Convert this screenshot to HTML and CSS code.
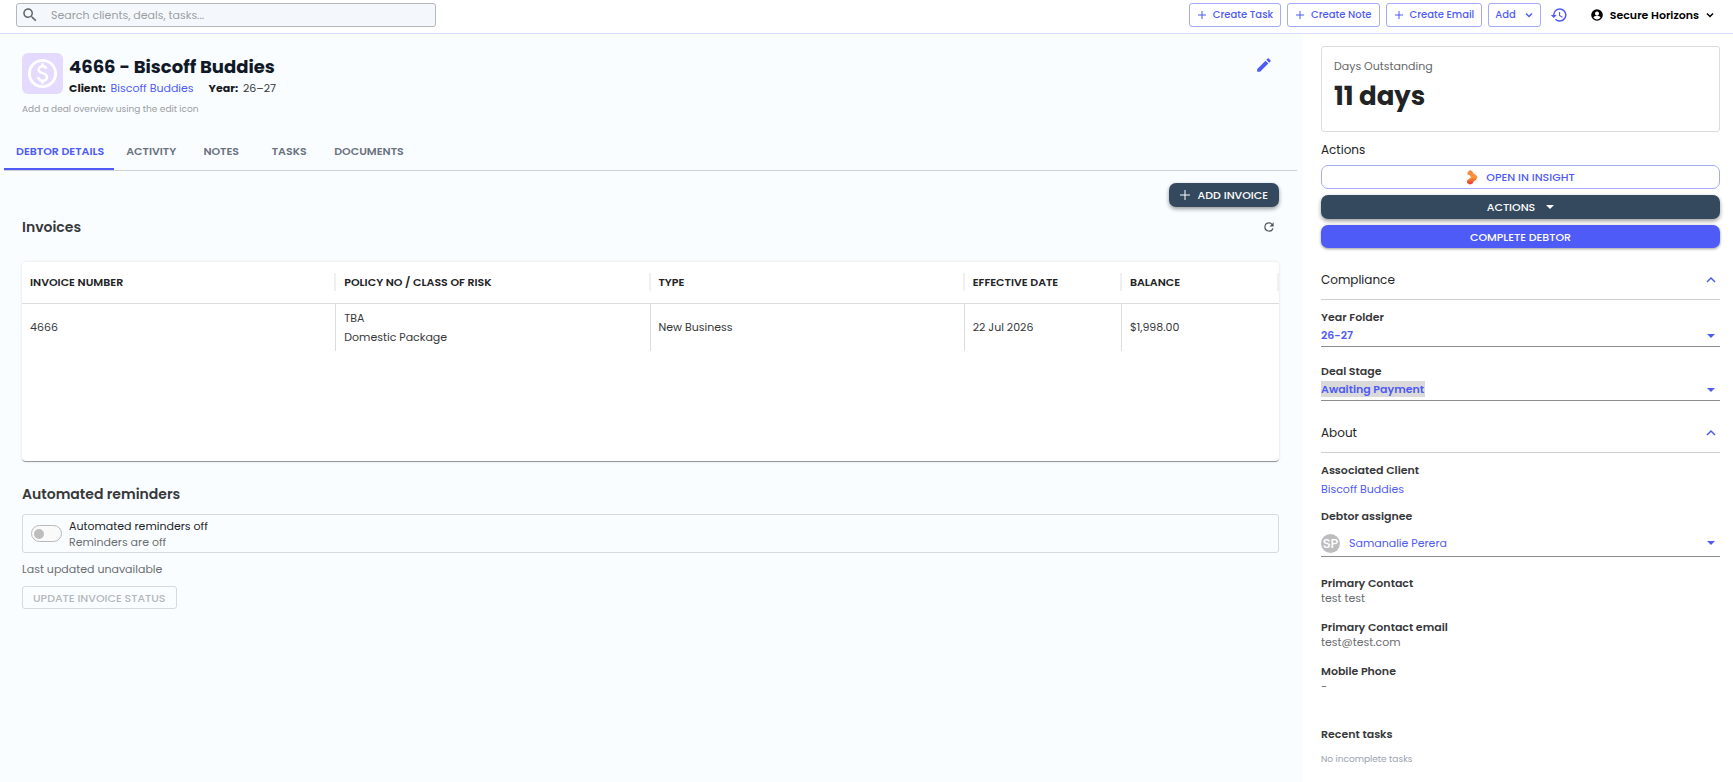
FILE: index.html
```html
<!DOCTYPE html>
<html lang="en">
<head>
  <meta charset="UTF-8">
  <meta name="viewport" content="width=device-width, initial-scale=1.0">
  <title>4666 - Biscoff Buddies</title>
  <link rel="stylesheet" href="styles.css">
</head>
<body>
  <header class="topbar">
    <label class="search">
      <svg class="search-icon" viewBox="0 0 24 24"><path d="M15.5 14h-.79l-.28-.27C15.41 12.59 16 11.11 16 9.5 16 5.91 13.09 3 9.5 3S3 5.91 3 9.5 5.91 16 9.5 16c1.61 0 3.09-.59 4.23-1.57l.27.28v.79l5 4.99L20.49 19l-4.99-5zm-6 0C7.01 14 5 11.99 5 9.5S7.01 5 9.5 5 14 7.01 14 9.5 11.99 14 9.5 14z"/></svg>
      <input type="search" aria-label="Search" placeholder="Search clients, deals, tasks...">
    </label>
    <nav class="top-actions">
      <button class="top-btn"><svg class="plus" viewBox="0 0 10 10"><path d="M5 1v8M1 5h8"/></svg>Create Task</button>
      <button class="top-btn"><svg class="plus" viewBox="0 0 10 10"><path d="M5 1v8M1 5h8"/></svg>Create Note</button>
      <button class="top-btn"><svg class="plus" viewBox="0 0 10 10"><path d="M5 1v8M1 5h8"/></svg>Create Email</button>
      <button class="top-btn add-btn">Add<svg class="chevron" viewBox="0 0 10 10"><path d="M2 3.5l3 3 3-3"/></svg></button>
      <button class="icon-btn" aria-label="History">
        <svg class="history-icon" viewBox="0 0 24 24"><path d="M13 3a9 9 0 0 0-9 9H1l3.89 3.89.07.14L9 12H6a7 7 0 1 1 2.06 4.94l-1.42 1.42A9 9 0 1 0 13 3zm-1 5v5l4.28 2.54.72-1.21-3.5-2.08V8z"/></svg>
      </button>
      <button class="account">
        <svg class="account-icon" viewBox="0 0 24 24"><path d="M12 2a10 10 0 1 0 0 20 10 10 0 0 0 0-20zm0 4a3.5 3.5 0 1 1 0 7 3.5 3.5 0 0 1 0-7zm0 13.5c-2.6 0-4.8-1.2-6.1-3.1.1-2 4.1-3 6.1-3s6 1 6.1 3c-1.3 1.9-3.5 3.1-6.1 3.1z"/></svg>
        Secure Horizons
        <svg class="chevron" viewBox="0 0 10 10"><path d="M2 3.5l3 3 3-3"/></svg>
      </button>
    </nav>
  </header>

  <div class="page">
    <main class="main">
      <section class="deal-header">
        <div class="deal-top">
          <div class="deal-icon">
            <svg viewBox="0 0 24 24"><path d="M12 2C6.48 2 2 6.48 2 12s4.48 10 10 10 10-4.48 10-10S17.52 2 12 2zm0 18c-4.41 0-8-3.59-8-8s3.59-8 8-8 8 3.59 8 8-3.59 8-8 8zm.89-8.9c-1.78-.59-2.64-.96-2.64-1.9 0-1.02 1.11-1.39 1.81-1.39 1.31 0 1.79.99 1.9 1.34l1.58-.67c-.15-.44-.82-1.91-2.66-2.23V5h-1.75v1.26c-2.6.56-2.62 2.85-2.62 2.96 0 2.27 2.25 2.91 3.35 3.31 1.58.56 2.28 1.07 2.28 2.03 0 1.13-1.05 1.61-1.98 1.61-1.82 0-2.34-1.87-2.4-2.09l-1.66.67c.63 2.19 2.28 2.78 3.02 2.96V19h1.75v-1.24c.52-.09 3.02-.59 3.02-3.22.01-1.39-.6-2.61-3-3.44z"/></svg>
          </div>
          <div class="deal-title">
            <h1>4666 - Biscoff Buddies</h1>
            <p class="deal-meta"><b>Client:</b> <a href="#">Biscoff Buddies</a> <b class="year">Year:</b> 26–27</p>
          </div>
          <button class="icon-btn edit-btn" aria-label="Edit deal">
            <svg viewBox="0 0 24 24"><path d="M3 17.25V21h3.75L17.81 9.94l-3.75-3.75L3 17.25zM20.71 7.04a1 1 0 0 0 0-1.41l-2.34-2.34a1 1 0 0 0-1.41 0l-1.83 1.83 3.75 3.75 1.83-1.83z"/></svg>
          </button>
        </div>
        <p class="overview">Add a deal overview using the edit icon</p>
      </section>

      <nav class="tabs">
        <a class="tab active" href="#">DEBTOR DETAILS</a>
        <a class="tab" href="#">ACTIVITY</a>
        <a class="tab" href="#">NOTES</a>
        <a class="tab" href="#">TASKS</a>
        <a class="tab" href="#">DOCUMENTS</a>
      </nav>

      <div class="content">
        <button class="btn dark add-invoice"><svg class="plus" viewBox="0 0 10 10"><path d="M5 0v10M0 5h10"/></svg>ADD INVOICE</button>
        <div class="section-head">
          <h2>Invoices</h2>
          <button class="icon-btn refresh-btn" aria-label="Refresh">
            <svg viewBox="0 0 24 24"><path d="M17.65 6.35A7.96 7.96 0 0 0 12 4a8 8 0 1 0 7.73 10h-2.08A6 6 0 1 1 12 6c1.66 0 3.14.69 4.22 1.78L13 11h7V4l-2.35 2.35z"/></svg>
          </button>
        </div>

        <div class="table-card">
          <table class="invoices">
            <thead>
              <tr>
                <th class="wide"><span>INVOICE NUMBER</span></th>
                <th class="wide"><span>POLICY NO / CLASS OF RISK</span></th>
                <th class="wide"><span>TYPE</span></th>
                <th><span>EFFECTIVE DATE</span></th>
                <th><span>BALANCE</span></th>
              </tr>
            </thead>
            <tbody>
              <tr>
                <td>4666</td>
                <td>TBA<br>Domestic Package</td>
                <td>New Business</td>
                <td>22 Jul 2026</td>
                <td>$1,998.00</td>
              </tr>
            </tbody>
          </table>
        </div>

        <h2>Automated reminders</h2>
        <div class="reminder-box">
          <input class="switch" type="checkbox" role="switch" id="reminders">
          <label for="reminders">Automated reminders off<small>Reminders are off</small></label>
        </div>
        <p class="updated">Last updated unavailable</p>
        <button class="update-btn" disabled>UPDATE INVOICE STATUS</button>
      </div>
    </main>

    <aside class="sidebar">
      <div class="days-card">
        <p>Days Outstanding</p>
        <strong>11 days</strong>
      </div>

      <h3 class="actions-title">Actions</h3>
      <div class="actions">
        <button class="btn outline">
          <svg class="insight-logo" viewBox="0 0 12 16">
            <defs>
              <linearGradient id="flame" x1="0" y1="0" x2="0" y2="1">
                <stop offset="0" stop-color="#f4803c"/>
                <stop offset=".5" stop-color="#fb963a"/>
                <stop offset="1" stop-color="#ec3030"/>
              </linearGradient>
            </defs>
            <path fill="url(#flame)" d="M1.5 3.5L4 1l2.500 1.500L7.500 4.500l2.500 1.500L11.500 8 10 11l-2 1-1.500 2.500L4 15.500 1 14v-2.500l2.500-2L5 8.500 4 6.500 1.500 5.500z"/>
          </svg>
          OPEN IN INSIGHT
        </button>
        <button class="btn dark">ACTIONS <svg class="caret" viewBox="0 0 8 4"><path d="M0 0h8L4 4z"/></svg></button>
        <button class="btn primary">COMPLETE DEBTOR</button>
      </div>

      <button class="accordion">Compliance<svg class="chevron" viewBox="0 0 10 10"><path d="M1 7l4-4 4 4"/></svg></button>
      <div class="field">
        <label for="year">Year Folder</label>
        <div class="select-box">
          <select id="year"><option>26-27</option></select>
          <svg class="caret" viewBox="0 0 8 4"><path d="M0 0h8L4 4z"/></svg>
        </div>
      </div>
      <div class="field">
        <label for="stage">Deal Stage</label>
        <div class="select-box">
          <select id="stage" class="highlight"><option>Awaiting Payment</option></select>
          <svg class="caret" viewBox="0 0 8 4"><path d="M0 0h8L4 4z"/></svg>
        </div>
      </div>

      <button class="accordion">About<svg class="chevron" viewBox="0 0 10 10"><path d="M1 7l4-4 4 4"/></svg></button>
      <div class="client">
        <h4>Associated Client</h4>
        <a href="#">Biscoff Buddies</a>
      </div>
      <div class="field assignee">
        <label for="assignee">Debtor assignee</label>
        <div class="select-box">
          <span class="avatar">SP</span>
          <select id="assignee"><option>Samanalie Perera</option></select>
          <svg class="caret" viewBox="0 0 8 4"><path d="M0 0h8L4 4z"/></svg>
        </div>
      </div>
      <dl class="contact">
        <div><dt>Primary Contact</dt><dd>test test</dd></div>
        <div><dt>Primary Contact email</dt><dd>test@test.com</dd></div>
        <div><dt>Mobile Phone</dt><dd>-</dd></div>
      </dl>
      <h4>Recent tasks</h4>
      <p class="no-tasks">No incomplete tasks</p>
    </aside>
  </div>
</body>
</html>
```
FILE: styles.css
```css
* {
  box-sizing: border-box;
}

body {
  margin: 0;
  min-height: 100vh;
  display: flex;
  flex-direction: column;
  background: #f9fdff;
  color: #37383a;
  font-family: Poppins, Inter, "Open Sans", sans-serif;
  font-size: 11px;
  line-height: 16px;
}

h1, h2, h3, h4, p, dl, dd {
  margin: 0;
}

button, input, select {
  font: inherit;
  color: inherit;
}

button {
  display: flex;
  align-items: center;
  padding: 0;
  border: none;
  background: none;
  cursor: pointer;
}

a {
  color: #4f5bf7;
  text-decoration: none;
}

svg {
  flex: none;
  fill: currentColor;
}

.plus, .chevron {
  width: 10px;
  height: 10px;
  fill: none;
  stroke: currentColor;
}

.chevron {
  stroke-width: 1.5;
}

.caret {
  width: 8px;
  height: 4px;
}

/* Top bar */
.topbar {
  display: flex;
  justify-content: space-between;
  height: 34px;
  padding: 3px 18px 0 16px;
  background: #fff;
  border-bottom: 1px solid #d9dbfc;
}

.search {
  display: flex;
  align-items: center;
  gap: 12px;
  width: 420px;
  height: 24px;
  padding: 0 4px;
  border: 1px solid #b4b8bb;
  border-radius: 3px;
  background: #f4f8fc;
}

.search-icon {
  width: 18px;
  height: 18px;
  fill: #646668;
}

.search input {
  flex: 1;
  min-width: 0;
  padding: 0;
  border: none;
  outline: none;
  background: none;
}

.search input::placeholder {
  color: #9b9ea1;
}

.top-actions {
  display: flex;
  align-items: flex-start;
  gap: 6px;
}

.top-btn {
  height: 24px;
  gap: 6px;
  padding: 0 7px;
  border: 1px solid #a5abfb;
  border-radius: 3px;
  color: #4f5bf7;
  font-size: 10px;
  font-weight: 500;
}

.add-btn {
  gap: 8px;
  padding: 0 6px;
}

.icon-btn {
  height: 24px;
  color: #4f5bf7;
}

.history-icon {
  width: 18px;
  height: 18px;
  margin: 0 3px;
}

.account {
  height: 24px;
  gap: 6px;
  margin-left: 13px;
  color: #000;
  font-weight: 600;
}

.account-icon {
  width: 14px;
  height: 14px;
}

/* Page columns */
.page {
  flex: 1;
  display: flex;
}

.main {
  flex: 1;
  min-width: 0;
  padding: 19px 6px 0 4px;
}

.sidebar {
  width: 430px;
  padding: 12px 13px 10px 18px;
  background: #fff;
}

.deal-header {
  padding: 0 18px;
}

.deal-top {
  display: flex;
  gap: 6px;
}

.deal-icon {
  width: 41px;
  height: 41px;
  padding: 3px;
  border-radius: 6px;
  background: #e4dafe;
  color: #fff;
}

.deal-icon svg {
  display: block;
}

.deal-title {
  flex: 1;
}

h1 {
  color: #111827;
  font-size: 18px;
  line-height: 27px;
}

.deal-meta b {
  color: #18191b;
  margin-right: 2px;
}

.deal-meta .year {
  margin-left: 12px;
}

.edit-btn {
  width: 18px;
  margin-right: 6px;
}

.overview {
  margin-top: 5px;
  color: #9b9ea1;
  font-size: 9px;
}

/* Tabs */
.tabs {
  display: flex;
  margin-top: 17px;
  border-bottom: 1px solid #cdd1d4;
}

.tab {
  min-width: 68px;
  height: 36px;
  padding: 9px 10px 0 12px;
  border-bottom: 2px solid transparent;
  color: #6b7280;
  font-weight: 600;
  text-align: center;
}

.tab.active {
  color: #4f5bf7;
  border-color: #4f5bf7;
}

/* Debtor details */
.content {
  padding: 12px 18px;
}

.btn {
  justify-content: center;
  height: 24px;
  border-radius: 7px;
  font-weight: 500;
}

.dark {
  background: #34495e;
  color: #fff;
  box-shadow: 0 2px 4px rgba(0, 0, 0, 0.4);
}

.primary {
  height: 23px;
  background: #4f5bf7;
  color: #fff;
  box-shadow: 0 1px 3px rgba(0, 0, 0, 0.4);
}

.outline {
  border: 1px solid #a5abfb;
  color: #4f5bf7;
}

.add-invoice {
  gap: 8px;
  margin-left: auto;
  padding: 0 11px;
}

h2 {
  font-size: 14px;
  font-weight: 600;
  line-height: 22px;
}

.section-head {
  display: flex;
  justify-content: space-between;
  align-items: center;
  margin-top: 8px;
}

.refresh-btn {
  margin-right: 3px;
  color: #555759;
}

.refresh-btn svg {
  width: 14px;
  height: 14px;
}

.table-card {
  height: 200px;
  margin: 23px 0 21px;
  border-bottom: 1px solid #95999c;
  border-radius: 4px;
  background: #fff;
  box-shadow: 0 0 3px rgba(0, 0, 0, 0.12);
}

.invoices {
  width: 100%;
  table-layout: fixed;
  border-collapse: separate;
  border-spacing: 0;
}

.wide {
  width: 25%;
}

th {
  height: 42px;
  padding: 0 0 1px;
  border-bottom: 1px solid #dadcde;
  color: #222325;
  font-weight: 600;
  text-align: left;
}

th span {
  display: block;
  padding-left: 8px;
  border-right: 2px solid #f0f0f0;
  line-height: 18px;
}

td {
  height: 47px;
  padding: 0 8px;
  border-right: 1px solid #dadcde;
  line-height: 19px;
}

td:last-child {
  border-right: none;
}

.reminder-box {
  display: flex;
  align-items: center;
  gap: 7px;
  height: 39px;
  margin-top: 9px;
  padding: 0 8px;
  border: 1px solid #d5dadd;
  border-radius: 3px;
}

.reminder-box label {
  color: #222325;
}

.reminder-box small {
  display: block;
  color: #6b6d6f;
  font-size: 11px;
}

.switch {
  appearance: none;
  width: 31px;
  height: 17px;
  margin: 0;
  padding: 3px 2px;
  border: 1px solid #b9b9b9;
  border-radius: 9px;
  background: #fafafa;
}

.switch::before {
  content: "";
  display: block;
  width: 10px;
  height: 10px;
  border-radius: 50%;
  background: #bdbdbd;
}

.updated {
  margin: 8px 0 9px;
  color: #6b6d6f;
}

.update-btn {
  height: 23px;
  padding: 0 10px;
  border: 1px solid #d5dadd;
  border-radius: 3px;
  color: #b4b7b9;
  font-weight: 500;
}

/* Sidebar */
.days-card {
  height: 86px;
  padding: 11px 12px;
  border: 1px solid #dcdcdc;
  border-radius: 3px;
}

.days-card p {
  color: #646668;
}

.days-card strong {
  display: block;
  color: #222325;
  font-size: 26px;
  line-height: 44px;
}

.actions-title {
  margin: 8px 0 5px;
  color: #222325;
  font-size: 12px;
  font-weight: 400;
  line-height: 20px;
}

.actions {
  display: flex;
  flex-direction: column;
  gap: 6px;
}

.actions .caret {
  margin-left: 11px;
}

.insight-logo {
  width: 12px;
  height: 16px;
  margin-right: 8px;
}

.accordion {
  justify-content: space-between;
  width: 100%;
  height: 38px;
  margin-top: 14px;
  padding: 0 4px 2px 0;
  border-bottom: 1px solid #cfcfcf;
  color: #222325;
  font-size: 12px;
}

.accordion .chevron {
  stroke: #4f5bf7;
}

h4, .field label, dt {
  display: block;
  color: #37383a;
  font-size: 11px;
  font-weight: 600;
  line-height: 16px;
}

.field {
  margin-top: 9px;
}

.field + .field {
  margin-top: 16px;
}

.select-box {
  display: flex;
  align-items: center;
  justify-content: space-between;
  height: 22px;
  padding-right: 5px;
  border-bottom: 1px solid #8c8c8c;
  color: #4f5bf7;
}

.select-box select {
  appearance: none;
  height: 16px;
  margin-bottom: 2px;
  padding: 0;
  border: none;
  background: none;
  font-weight: 600;
}

.select-box .highlight {
  background: #dadada;
}

.client {
  margin: 9px 0 11px;
}

.client a {
  display: block;
  margin-top: 3px;
}

.assignee .select-box {
  height: 33px;
  padding-top: 6px;
  gap: 9px;
}

.select-box #assignee {
  flex: 1;
  margin: 0;
  font-weight: 400;
}

.avatar {
  width: 19px;
  height: 19px;
  border-radius: 50%;
  background: #bdbdbd;
  color: #fff;
  font-size: 13px;
  font-weight: 500;
  line-height: 19px;
  text-align: center;
}

.contact {
  margin: 18px 0 32px;
}

.contact div {
  margin-bottom: 13px;
}

dd {
  color: #6b6d6f;
  line-height: 15px;
}

.no-tasks {
  margin-top: 9px;
  color: #9ca3af;
  font-size: 9px;
}
```
